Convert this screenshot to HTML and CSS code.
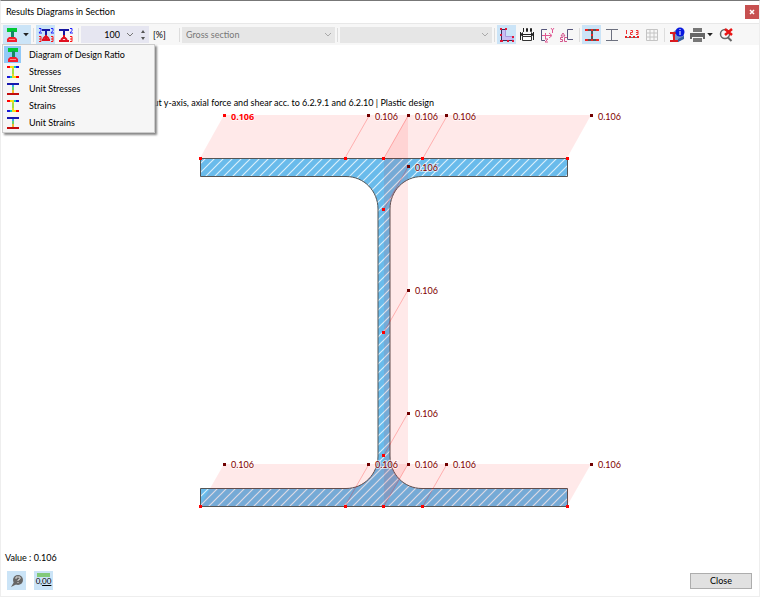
FILE: index.html
```html
<!DOCTYPE html>
<html lang="en">
<head>
<meta charset="utf-8">
<title>Results Diagrams in Section</title>
<link rel="stylesheet" href="styles.css">
</head>
<body>
<svg class="defs" aria-hidden="true">
  <defs>
    <symbol id="ratio" viewBox="0 0 14 16"><path d="M2 1h10v4H2z" fill="#00c832"/><path d="M6 4h3v7H6z" fill="#138a62"/><path d="M4 10h6l2 2v3H2v-3z" fill="#f51d2d"/><path d="M4 12.500h6" stroke="#f88"/></symbol>
    <symbol id="stress" viewBox="0 0 14 16"><path d="M1 3h3M10 13h3" stroke="#f00" stroke-width="2"/><path d="M10 3h3M1 13h3" stroke="#1717d8" stroke-width="2"/><path d="M4 3h2M8 13h2" stroke="#fd0" stroke-width="2"/><path d="M8 3h2M4 13h2" stroke="#0cc" stroke-width="2"/><path d="M7 2v12" stroke="#e5dc26" stroke-width="2"/><path d="M7 5v5" stroke="#a5e040" stroke-width="2"/></symbol>
    <symbol id="unit" viewBox="0 0 14 16"><path d="M1 3h12" stroke="#1717ad" stroke-width="2"/><path d="M1 13h12" stroke="#c40c0c" stroke-width="2"/><path d="M7 4v3" stroke="#34aeea" stroke-width="2"/><path d="M7 6v3" stroke="#65d66c" stroke-width="2"/><path d="M7 9v3" stroke="#efb82e" stroke-width="2"/></symbol>
    <symbol id="chev" viewBox="0 0 8 6"><path d="M1 1l3 3 3-3" fill="none" stroke="currentColor"/></symbol>
    <pattern id="hatch" width="9" height="9" patternUnits="userSpaceOnUse" patternTransform="translate(4 0)"><rect width="9" height="9" fill="#69bbeb"/><path d="M-1 10L10 -1M-1 1L1 -1M8 10L10 8" stroke="#d9effb" stroke-width="1.200"/></pattern>
  </defs>
</svg>
<main class="window">
  <header class="titlebar">
    <h1 class="title">Results Diagrams in Section</h1>
    <button class="close-x" aria-label="Close window"><svg width="8" height="8" viewBox="0 0 8 8"><path d="M2 2l4 4M6 2L2 6" stroke="#fff" stroke-width="1.500"/></svg></button>
  </header>
  <div class="toolbar">
    <div class="dropdown">
      <button class="tool active wide" aria-label="Diagram type"><svg width="14" height="16"><use href="#ratio"/></svg><svg width="6" height="4" viewBox="0 0 7 5"><path d="M0 0h7L3.500 4z" fill="#222"/></svg></button>
      <div class="menu">
        <button class="item"><span class="mark on"><svg width="14" height="16"><use href="#ratio"/></svg></span>Diagram of Design Ratio</button>
        <button class="item"><span class="mark"><svg width="14" height="16"><use href="#stress"/></svg></span>Stresses</button>
        <button class="item"><span class="mark"><svg width="14" height="16"><use href="#unit"/></svg></span>Unit Stresses</button>
        <button class="item"><span class="mark"><svg width="14" height="16"><use href="#stress"/></svg></span>Strains</button>
        <button class="item"><span class="mark"><svg width="14" height="16"><use href="#unit"/></svg></span>Unit Strains</button>
      </div>
    </div>
    <span class="sep"></span>
    <button class="tool active" aria-label="Values on both sides"><svg width="16" height="16" viewBox="0 0 16 16"><path d="M4 3h8M8 3v5" stroke="#1616a0" stroke-width="2"/><path d="M8 8v4M4 13h8M5 12l3-3 3 3" fill="none" stroke="#e01020" stroke-width="2"/><path d="M1 1.500h2v2L1 6h3M13 1.500h2v2L13 6h3" fill="none" stroke="#22f"/><path d="M1 9.500h2v5H1M1 12h2M13 9.500h2v5h-2M13 12h2" fill="none" stroke="#f11"/></svg></button>
    <button class="tool" aria-label="Values on right side"><svg width="16" height="16" viewBox="0 0 16 16"><path d="M1 3h10M6 3v5" stroke="#1616a0" stroke-width="2"/><path d="M6 8v4M1 14h10M3 13l3-3 3 3" fill="none" stroke="#e01020" stroke-width="2"/><path d="M12 1.500h2v2L12 6h3" fill="none" stroke="#22f"/><path d="M12 9.500h2v5h-2M12 12h2" fill="none" stroke="#f11"/></svg></button>
    <span class="sep"></span>
    <div class="spin">
      <input class="number" type="text" value="100" aria-label="Scale in percent">
      <svg class="grey" width="8" height="6"><use href="#chev"/></svg>
      <svg width="6" height="12" viewBox="0 0 6 12"><path d="M1 4l2-3 2 3zM1 8l2 3 2-3z" fill="#555"/></svg>
    </div>
    <span class="percent">[%]</span>
    <span class="sep"></span>
    <div class="combo"><select class="select" disabled aria-label="Section type"><option>Gross section</option></select><svg class="arrow" width="8" height="6"><use href="#chev"/></svg></div>
    <span class="sep"></span>
    <div class="combo"><select class="select" disabled aria-label="Section part"><option></option></select><svg class="arrow" width="8" height="6"><use href="#chev"/></svg></div>
    <span class="sep"></span>
    <button class="tool active" aria-label="Section outline"><svg width="16" height="16" viewBox="0 0 16 16"><path d="M2 2h4v8h8v4H2z" fill="#c9bff3"/><path d="M2.500 2v11.500H14M2 2.500h4" fill="none" stroke="#33305c"/><path d="M6.500 3v6.500H14v4" fill="none" stroke="#a79bdc"/><path d="M1 1h2v2H1zM1 7h2v2H1zM1 13h3v2H1zM8 13h2v2H8zM13 13h2v2h-2zM13 9h2v2h-2zM6 1h2v2H6z" fill="#e01838"/></svg></button>
    <button class="tool" aria-label="Dimensions"><svg width="16" height="16" viewBox="0 0 16 16"><path d="M1.500 5v8M14.500 5v8M1 7.500h14" fill="none" stroke="#222"/><path d="M4 5L1 7.500 4 10zM12 5l3 2.500-3 2.500z" fill="#222"/><path d="M3.500 9.500h9v4h-9z" fill="#fff" stroke="#333"/><path d="M4.500 1v4M7.500 1.500h1v3h-1zM11.500 1.500h1v3h-1z" fill="none" stroke="#222"/></svg></button>
    <button class="tool" aria-label="Principal axes"><svg width="16" height="16" viewBox="0 0 16 16"><path d="M8 2.500H2.500v11H6" fill="none" stroke="#56567c"/><path d="M3 8.500h9M6.500 6v6M10 6l3 2.500-3 2.500M12 1l1.500 2L15 1M13.500 3v3M6 12h3l-3 3h3" fill="none" stroke="#e05792"/></svg></button>
    <button class="tool" aria-label="Shear center"><svg width="16" height="16" viewBox="0 0 16 16"><path d="M14 2.500H8.500v10H14" fill="none" stroke="#56567c"/><path d="M4 6l2 3H2zM4 10.500H1.500v2h2v2H1M8 10.500H5.500v4H8" fill="none" stroke="#d4568d"/></svg></button>
    <span class="sep"></span>
    <button class="tool active" aria-label="Stress points"><svg width="16" height="16" viewBox="0 0 16 16"><path d="M2 3h12M2 13h12M8 3v10" stroke="#555" stroke-width="2"/><path d="M1 2h3v2H1zM7 2h2v2H7zM12 2h3v2h-3zM1 12h3v2H1zM7 12h2v2H7zM12 12h3v2h-3zM7 7h2v2H7z" fill="#f02020"/></svg></button>
    <button class="tool" aria-label="Section lines"><svg width="16" height="16" viewBox="0 0 16 16"><path d="M2 2.500h12M2 13.500h12M7.500 3v10" stroke="#6d7180"/></svg></button>
    <button class="tool" aria-label="Point numbers"><svg width="16" height="16" viewBox="0 0 16 16"><path d="M2 10.500h12" stroke="#777"/><path d="M1 9h2v2H1zM5 9h2v2H5zM9 9h2v2H9zM13 9h2v2h-2z" fill="#e22"/><path d="M2.500 3v4M6.500 3.500h2v2h-2v2h2M12 3.500h2v4h-2M12 5.500h2" fill="none" stroke="#e33"/></svg></button>
    <button class="tool" aria-label="Grid"><svg width="16" height="16" viewBox="0 0 16 16"><path d="M2.500 2.500h11v11h-11zM3 6h11M3 10h11M6 3v11M10 3v11" fill="none" stroke="#c4c4c4"/></svg></button>
    <span class="sep"></span>
    <button class="tool" aria-label="Section information"><svg width="16" height="16" viewBox="0 0 16 16"><path d="M3 6l5-4 7 3v6l-6 4H5z" fill="#7393c8"/><path d="M9 12l6-3v3l-6 3z" fill="#345f9f"/><path d="M1 6h7M1 14h8M5 6v8" stroke="#d91a1f" stroke-width="2"/><circle cx="11" cy="5" r="4.500" fill="#0919df"/><path d="M11 4v4M11 2v1" stroke="#fff"/></svg></button>
    <button class="tool" aria-label="Print"><svg width="16" height="16" viewBox="0 0 16 16"><path d="M4 1h9v4H4z" fill="#777"/><path d="M1 6h15v6h-2v-2H3v2H1z" fill="#666"/><path d="M4 11h9v4H4z" fill="#777"/></svg></button>
    <svg class="caret" width="6" height="4" viewBox="0 0 7 5"><path d="M0 0h7L3.500 4z" fill="#222"/></svg>
    <button class="tool" aria-label="Reset zoom"><svg width="16" height="16" viewBox="0 0 16 16"><circle cx="6" cy="7" r="4.500" fill="none" stroke="#666" stroke-width="1.500"/><path d="M8.500 10l4 4" stroke="#666" stroke-width="2"/><path d="M6 2l7 6M13 2L6 8" stroke="#e81515" stroke-width="2.500"/></svg></button>
  </div>
  <svg class="diagram" viewBox="1 45 758 507" role="img" aria-label="Design ratio diagram over the section">
    <text class="heading" x="434" y="106" text-anchor="end">about y-axis, axial force and shear acc. to 6.2.9.1 and 6.2.10 | Plastic design</text>
    <path class="steel" d="M200.500 158.500H567.500V176.500H422C404 176.500 390 191 390 209V456C390 474 404 488.500 422 488.500H567.500V506.500H200.500V488.500H346C364 488.500 378 474 378 456V209C378 191 364 176.500 346 176.500H200.500Z"/>
    <g class="area">
      <path d="M200 158L224 115H591L567 158Z"/>
      <path d="M384 158L408 115V464L384 506Z"/>
      <path d="M200 506L224 464H591L567 506Z"/>
    </g>
    <path class="ray" d="M345 158L369 116M384 158L408 116M423 158L447 116M384 209L408 167M384 332L408 290M384 455L408 413M345 506L369 464M384 506L408 464M423 506L447 464"/>
    <path class="dots" d="M199 157h3v3h-3zM344 157h3v3h-3zM382 157h3v3h-3zM421 157h3v3h-3zM566 157h3v3h-3zM382 208h3v3h-3zM382 331h3v3h-3zM382 454h3v3h-3zM199 505h3v3h-3zM344 505h3v3h-3zM382 505h3v3h-3zM421 505h3v3h-3zM566 505h3v3h-3zM223 114h3v3h-3z"/>
    <path class="ends" d="M367 114h3v3h-3zM407 114h3v3h-3zM445 114h3v3h-3zM590 114h3v3h-3zM407 165h3v3h-3zM407 289h3v3h-3zM407 412h3v3h-3zM223 463h3v3h-3zM367 463h3v3h-3zM407 463h3v3h-3zM445 463h3v3h-3zM590 463h3v3h-3z"/>
    <g class="values">
      <text class="max" x="231" y="120">0.106</text><text x="375" y="120">0.106</text><text x="415" y="120">0.106</text><text x="453" y="120">0.106</text><text x="598" y="120">0.106</text>
      <text x="415" y="171">0.106</text><text x="415" y="294">0.106</text><text x="415" y="417">0.106</text>
      <text x="231" y="468">0.106</text><text x="375" y="468">0.106</text><text x="415" y="468">0.106</text><text x="453" y="468">0.106</text><text x="598" y="468">0.106</text>
    </g>
  </svg>
  <p class="status">Value : 0.106</p>
  <footer class="footer">
    <button class="tool active" aria-label="Help"><svg width="16" height="16" viewBox="0 0 16 16"><circle cx="9" cy="7" r="5" fill="#666"/><path d="M5 9l-3 5 6-3z" fill="#666"/><path d="M7 6V4h4v2L9 7v1M9 9v1" fill="none" stroke="#ddd"/></svg></button>
    <button class="tool active digits" aria-label="Decimal places"><span class="ruler"></span><span>0,<u>00</u></span></button>
    <button class="close">Close</button>
  </footer>
</main>
</body>
</html>
```
FILE: styles.css
```css
* { box-sizing: border-box; }
body { margin: 0; background: #fff; color: #000; font: 9px/12px Lato, "Open Sans", sans-serif; }
button, input, select { font: inherit; color: inherit; border: 0; padding: 0; margin: 0; background: none; }
svg { display: block; flex: none; }
.defs { position: absolute; width: 0; height: 0; }
.window { min-height: 100vh; display: flex; flex-direction: column; border: 1px solid #eee; border-top: 1px solid #777; }
.titlebar { display: flex; align-items: center; justify-content: space-between; height: 22px; padding-left: 5px; }
.title { margin: 0; font-size: 9px; font-weight: 400; }
.close-x { width: 14px; height: 14px; display: grid; place-items: center; background: #c75050; }
.toolbar { display: flex; align-items: center; height: 22px; padding: 0 22px 0 2px; background: #f7f7f7; border-top: 1px solid #e8e8e8; }
.tool { width: 19px; height: 19px; flex: none; display: grid; place-items: center; }
.toolbar > .tool { margin-right: 1px; }
.tool.active { background: #cbe4f7; }
.tool.wide { width: 28px; display: flex; align-items: center; justify-content: space-between; padding: 0 2px; }
.sep { width: 1px; height: 14px; margin: 0 2px; background: #ddd; flex: none; }
.dropdown { position: relative; }
.menu { position: absolute; z-index: 1; top: 19px; left: -1px; width: 153px; padding: 1px; background: #f6f6f6; border: 1px solid #ccc; box-shadow: 2px 2px 2px #888; }
.item { display: flex; align-items: center; width: 100%; height: 17px; gap: 8px; text-align: left; }
.mark { width: 17px; height: 17px; display: grid; place-items: center; }
.mark.on { background: #91c9f7; }
.spin { display: flex; align-items: center; width: 68px; height: 17px; gap: 6px; padding-right: 3px; background: #e6e6f1; }
.number { flex: 1; min-width: 0; text-align: right; }
.grey { color: #777; }
.percent { width: 28px; padding-left: 4px; }
.combo { position: relative; flex: 1; min-width: 0; height: 16px; background: #e6e6e6; }
.select { appearance: none; width: 100%; height: 16px; padding-left: 4px; color: #777; opacity: 1; }
.arrow { position: absolute; right: 3px; top: 5px; color: #aaa; pointer-events: none; }
.caret { margin: 0 4px 0 0; }
.diagram { width: 100%; flex: 1; min-height: 0; }
.heading { font-size: 9px; fill: #000; }
.steel { fill: url(#hatch); stroke: #555; }
.area { fill: #f00; fill-opacity: .085; }
.ray { fill: none; stroke: #f00; stroke-opacity: .25; }
.dots { fill: #f00; shape-rendering: crispEdges; }
.ends { fill: #700000; shape-rendering: crispEdges; }
.values { font-size: 9px; fill: #800000; stroke: #fff; stroke-opacity: .6; stroke-width: 2px; paint-order: stroke; }
.max { fill: #f00; font-family: "Open Sans", sans-serif; font-weight: 700; }
.status { margin: 0; padding-left: 4px; }
.footer { display: flex; align-items: center; gap: 8px; padding: 7px 7px 6px 6px; }
.digits { display: flex; flex-direction: column; align-items: center; font-size: 8px; line-height: 9px; }
.ruler { width: 13px; height: 4px; background: #83ca79; margin-top: 2px; }
.close { margin-left: auto; width: 62px; height: 16px; background: #e1e1e1; border: 1px solid #adadad; }
```
